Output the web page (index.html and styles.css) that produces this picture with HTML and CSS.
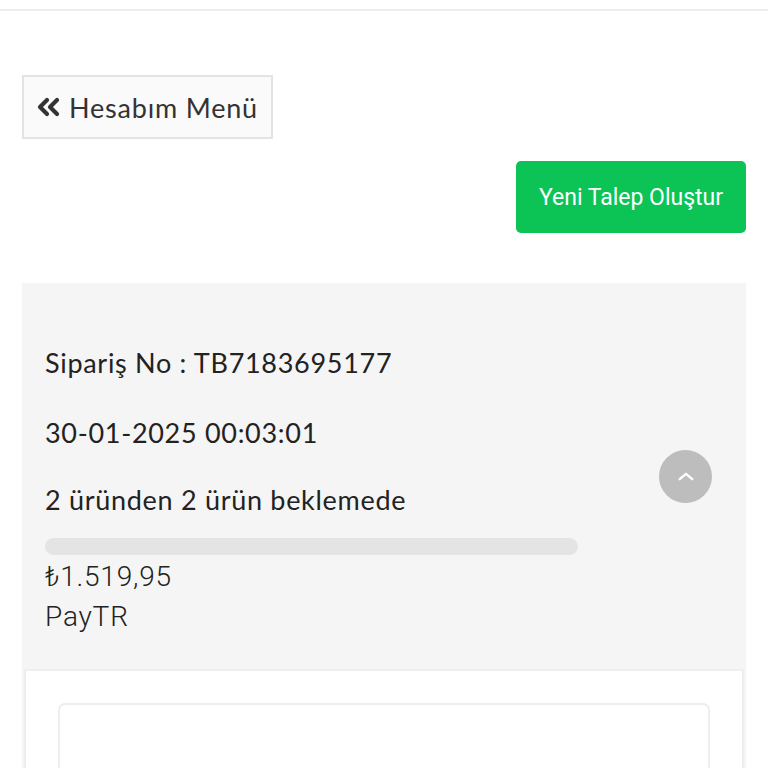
FILE: index.html
```html
<!DOCTYPE html>
<html lang="tr">
<head>
<meta charset="utf-8">
<link rel="stylesheet" href="styles.css">
</head>
<body>
<div class="topbar"></div>
<main class="page">
  <a class="back-btn" href="#">
    <svg class="back-icon" viewBox="0 0 26 20" width="26" height="20"><path d="M11 3 L4 10 L11 17 M21 3 L14 10 L21 17" fill="none" stroke="#333" stroke-width="4.2" stroke-linecap="round" stroke-linejoin="round"/></svg>
    <span>Hesabım Menü</span>
  </a>
  <div class="actions">
    <a class="new-btn" href="#">Yeni Talep Oluştur</a>
  </div>
  <section class="order">
    <div class="order-head">
      <p class="line l1">Sipariş No : TB7183695177</p>
      <p class="line l2">30-01-2025 00:03:01</p>
      <p class="line l3">2 üründen 2 ürün beklemede</p>
      <div class="progress"></div>
      <p class="price">₺1.519,95</p>
      <p class="pay">PayTR</p>
      <button class="toggle" aria-label="Kapat">
        <svg viewBox="0 0 20 12" width="18" height="11"><path d="M3 9 L10 3 L17 9" fill="none" stroke="#fff" stroke-width="2.6" stroke-linecap="round" stroke-linejoin="round"/></svg>
      </button>
    </div>
    <div class="order-body">
      <div class="item-card"></div>
    </div>
  </section>
</main>
</body>
</html>
```
FILE: styles.css
```css
* { box-sizing: border-box; }
html, body { margin: 0; padding: 0; background: #fff; }
body { font-family: Lato, "Noto Sans", sans-serif; color: #222; overflow: hidden; height: 768px; }
.topbar { height: 11px; border-bottom: 2px solid #ededed; }
.page { padding: 64px 22px 0 22px; }
.back-btn {
  display: inline-flex; align-items: center; gap: 7px;
  height: 64px; width: 251px; padding: 0 0 0 12px;
  background: #fafafa; border: 2px solid #e3e3e3; white-space: nowrap;
  color: #333; text-decoration: none; font-size: 27px; letter-spacing: 0.8px;
}
.back-icon { flex: none; }
.actions { display: flex; justify-content: flex-end; margin-top: 22px; }
.new-btn {
  display: flex; align-items: center; justify-content: center;
  width: 230px; height: 72px; border-radius: 5px;
  background: #0bc455; color: #fff; text-decoration: none;
  font-family: Roboto, "Noto Sans", sans-serif; font-size: 23px;
}
.order { margin-top: 50px; background: #f5f5f5; }
.order-head { position: relative; padding: 64px 23px 32px 23px; }
.line { margin: 0; font-size: 27px; line-height: 32px; color: #222; letter-spacing: 0.7px; }
.l1 { margin-bottom: 38px; }
.l2 { margin-bottom: 35px; }
.progress { width: 533px; height: 17px; border-radius: 9px; background: #e4e4e4; margin-top: 22px; }
.price, .pay { margin: 0; font-family: Roboto, "Noto Sans", sans-serif; font-weight: 300; font-size: 28px; line-height: 40px; color: #222; letter-spacing: 0.8px; }
.price { margin-top: 2px; }
.toggle {
  position: absolute; right: 34px; top: 167px;
  width: 53px; height: 53px; border-radius: 50%; border: 0; padding: 0;
  background: #bdbdbd; display: flex; align-items: center; justify-content: center;
}
.order-body { background: #fff; margin: 0 2px; border: 2px solid #eee; border-bottom: 0; padding: 32px 32px 0 32px; height: 120px; }
.item-card { height: 100px; border: 2px solid #eee; border-radius: 7px; border-bottom: 0; }
```
